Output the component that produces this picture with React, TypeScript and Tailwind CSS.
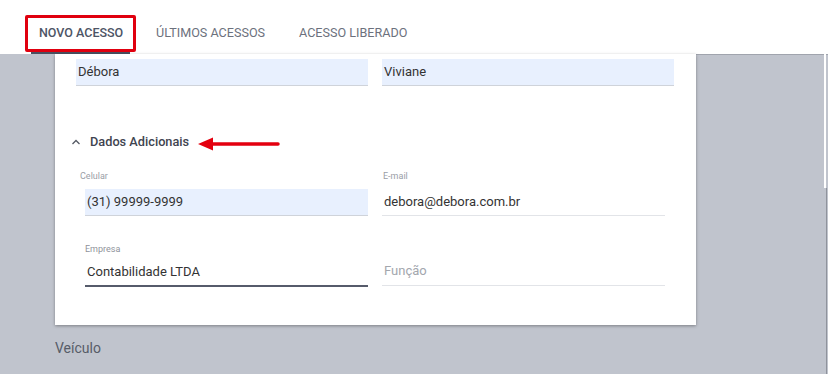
import React from "react";

export default function App() {
  return (
    <div
      className="relative w-[828px] h-[374px] overflow-hidden bg-[#c0c4cd]"
      style={{ fontFamily: "Roboto, 'Liberation Sans', sans-serif" }}
    >
      {/* Header with tabs */}
      <div className="relative h-[54px] bg-white flex items-end pl-[31px]">
        <div className="w-[99px] h-[40px] pl-[8px] flex items-center border-b-2 border-[#4a5060] text-[12.5px] font-medium text-[#4d5465] whitespace-nowrap">
          NOVO ACESSO
        </div>
        <div className="ml-[18px] w-[126px] h-[40px] pl-[8px] flex items-center border-b-2 border-transparent text-[12.6px] text-[#6c717d] whitespace-nowrap">
          ÚLTIMOS ACESSOS
        </div>
        <div className="ml-[17px] w-[125px] h-[40px] pl-[8px] flex items-center border-b-2 border-transparent text-[12.6px] text-[#6c717d] whitespace-nowrap">
          ACESSO LIBERADO
        </div>
        {/* red annotation box */}
        <div className="absolute left-[25px] top-[15px] w-[111px] h-[37px] border-[3px] border-[#e0000f] rounded-[2px]" />
      </div>

      {/* Body */}
      <div className="flex">
        <div className="w-[55px] shrink-0" />
        <div className="w-[641px] h-[271px] bg-white shadow-[0_1px_3px_rgba(0,0,0,0.35)] pt-[5px] pl-[16px] relative z-10">
          {/* Row 1 */}
          <div className="flex ml-[5px] gap-[14px]">
            <div className="w-[292px] h-[27px] bg-[#e8f0fe] border-b border-[#cfd3da] flex items-center pl-[2px] text-[13px] text-[#333]">
              Débora
            </div>
            <div className="w-[292px] h-[27px] bg-[#e8f0fe] border-b border-[#cfd3da] flex items-center pl-[2px] text-[13px] text-[#333]">
              Viviane
            </div>
          </div>

          {/* Dados Adicionais */}
          <div className="mt-[46px] h-[20px] flex items-center">
            <svg width="10" height="8" viewBox="0 0 10 8">
              <path d="M1.5 6 L5 2.5 L8.5 6" fill="none" stroke="#555a64" strokeWidth="1.3" />
            </svg>
            <span className="ml-[9px] text-[12.75px] font-medium text-[#3f4450]">Dados Adicionais</span>
            <svg width="84" height="16" viewBox="0 0 84 16" className="ml-[8px] mt-[4px]">
              <path d="M14 8 L81 8" stroke="#e4000f" strokeWidth="3.5" strokeLinecap="round" />
              <path d="M1 8 L16 1.5 L16 14.5 Z" fill="#e4000f" />
            </svg>
          </div>

          {/* Row 2 */}
          <div className="flex ml-[5px] gap-[14px] mt-[18px]">
            <div className="w-[292px]">
              <div className="ml-[4px] h-[12px] leading-[12px] text-[9px] text-[#9a9ea6]">Celular</div>
              <div className="ml-[9px] mt-[7px] w-[283px] h-[27px] bg-[#e8f0fe] border-b border-[#cfd3da] flex items-center pl-[2px] text-[13px] text-[#333]">
                (31) 99999-9999
              </div>
            </div>
            <div className="w-[292px]">
              <div className="ml-[1px] h-[12px] leading-[12px] text-[9px] text-[#9a9ea6]">E-mail</div>
              <div className="mt-[7px] w-[283px] h-[27px] border-b border-[#e2e4e8] flex items-center pl-[2px] text-[13px] text-[#333]">
                debora@debora.com.br
              </div>
            </div>
          </div>

          {/* Row 3 */}
          <div className="flex ml-[5px] gap-[14px] mt-[27px]">
            <div className="w-[292px]">
              <div className="ml-[9px] h-[12px] leading-[12px] text-[9px] text-[#8f939b]">Empresa</div>
              <div className="ml-[9px] mt-[4px] w-[283px] h-[28px] border-b-2 border-[#565b6b] flex items-center pl-[2px] text-[13px] text-[#333]">
                Contabilidade LTDA
              </div>
            </div>
            <div className="w-[292px]">
              <div className="mt-[16px] w-[283px] h-[27px] border-b border-[#e2e4e8] flex items-start pt-[2px] pl-[2px] text-[13px] text-[#a3a7ae]">
                Função
              </div>
            </div>
          </div>
        </div>
        <div className="flex-1 h-[271px] border-t border-[#a0a4ad]" />
      </div>

      {/* Veículo */}
      <div className="pl-[55px] mt-[14px] text-[14px] leading-[18px] text-[#575c68]">Veículo</div>

      {/* scrollbar edge */}
      <div className="absolute right-[2px] top-[54px] w-[2px] h-[134px] bg-white" />
      <div className="absolute right-[1px] top-[188px] bottom-0 w-[1px] bg-[#8f939c]" />
    </div>
  );
}
